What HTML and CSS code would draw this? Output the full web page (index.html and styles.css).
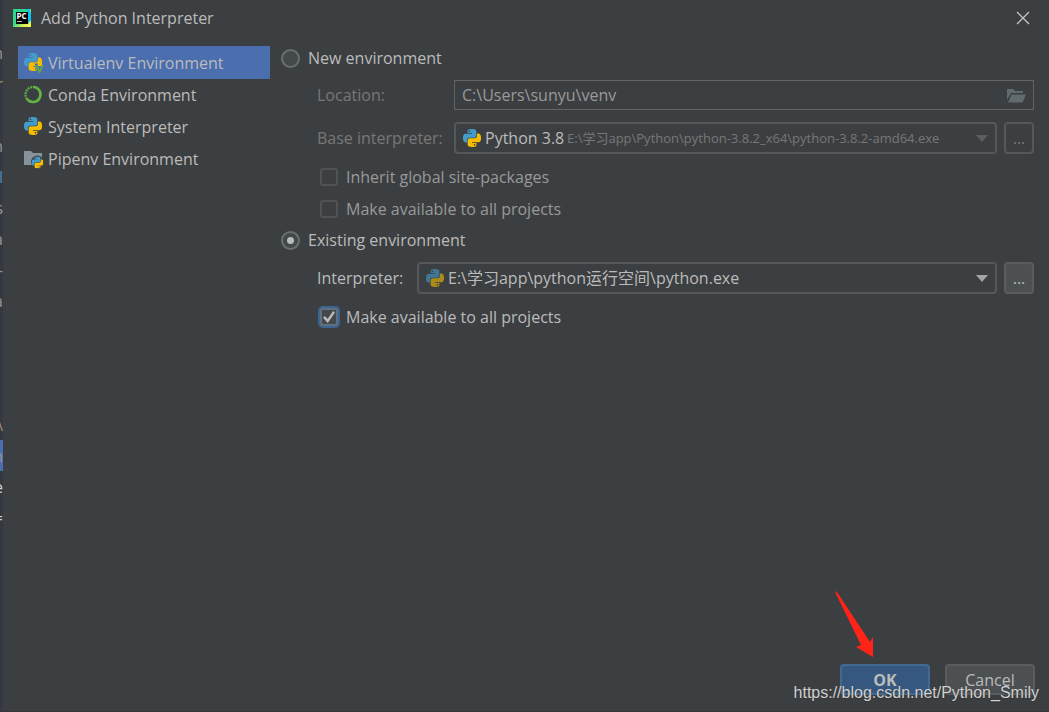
FILE: index.html
```html
<!DOCTYPE html>
<html lang="en">
<head>
<meta charset="utf-8">
<title>Add Python Interpreter</title>
<link rel="stylesheet" href="styles.css">
</head>
<body>
<svg class="defs" aria-hidden="true">
  <symbol id="snake" viewBox="0 0 24 24">
    <path d="M14.25.18l.9.2.73.26.59.3.45.32.34.34.25.34.16.33.1.3.04.26.02.2-.01.13V8.5l-.05.63-.13.55-.21.46-.26.38-.3.31-.33.25-.35.19-.35.14-.33.1-.3.07-.26.04-.21.02H8.77l-.69.05-.59.14-.5.22-.41.27-.33.32-.27.35-.2.36-.15.37-.1.35-.07.32-.04.27-.02.21v3.06H3.17l-.21-.03-.28-.07-.32-.12-.35-.18-.36-.26-.36-.36-.35-.46-.32-.59-.28-.73-.21-.88-.14-1.05-.05-1.23.06-1.22.16-1.04.24-.87.32-.71.36-.57.4-.44.42-.33.42-.24.4-.16.36-.1.32-.05.24-.01h.16l.06.01h8.16v-.83H6.18l-.01-2.75-.02-.37.05-.34.11-.31.17-.28.25-.26.31-.23.38-.2.44-.18.51-.15.58-.12.64-.1.71-.06.77-.04.84-.02 1.27.05zm-6.3 1.98l-.23.33-.08.41.08.41.23.34.33.22.41.09.41-.09.33-.22.23-.34.08-.41-.08-.41-.23-.33-.33-.22-.41-.09-.41.09z"/>
  </symbol>
  <symbol id="python" viewBox="0 0 24 24">
    <use href="#snake" width="24" height="24" fill="#429bca"/>
    <use href="#snake" width="24" height="24" fill="#f4bd00" transform="rotate(180 12 12)"/>
  </symbol>
</svg>

<div class="screen">
  <div class="editor-edge" aria-hidden="true">
    <span>n</span><span class="tan">r</span><span></span><span>n</span><span class="blue">l</span><span>s</span><span>a</span><span>-</span><span>a</span><span></span><span></span><span></span><span class="tan">\</span><span class="selected">n</span><span class="bright">e</span><span class="bright">=</span>
  </div>

  <main class="dialog">
    <header class="titlebar">
      <svg class="app-icon" viewBox="0 0 18 18" aria-hidden="true">
        <defs>
          <linearGradient id="brand" x1="0" y1="0" x2="1" y2="1">
            <stop offset="0" stop-color="#21d789"/><stop offset=".45" stop-color="#35d98b"/><stop offset=".75" stop-color="#d9ee4c"/><stop offset="1" stop-color="#fcf84a"/>
          </linearGradient>
        </defs>
        <path fill="url(#brand)" d="M0 0h18v18H0z"/>
        <path fill="#07c3f2" d="M12 0h4l2 5v6l-3 4V3z"/>
        <path fill="#000" d="M3 3h12v12H3z"/>
        <text class="app-letters" x="3.500" y="9.500">PC</text>
        <path fill="#bbb" d="M4 12h5v1H4z"/>
      </svg>
      <h1>Add Python Interpreter</h1>
      <button class="close" type="button" aria-label="Close">
        <svg viewBox="0 0 14 14" aria-hidden="true"><path d="M1 1l12 12M13 1L1 13" stroke="#c3c5c6" stroke-width="1.3"/></svg>
      </button>
    </header>

    <div class="content">
      <nav class="sidebar" aria-label="Environment type">
        <button class="nav-item active" type="button">
          <svg class="nav-icon" viewBox="0 0 20 20" aria-hidden="true"><use href="#python" width="18" height="18"/><path d="M10.500 10.500H20V20h-6z" fill="#4b6eaf"/><path d="M14 10h4v3h-4z" fill="#f4bd00"/><path d="M12.700 12l3 7 3-7" fill="none" stroke="#5fad4a" stroke-width="1.900"/></svg>
          Virtualenv Environment
        </button>
        <button class="nav-item" type="button">
          <svg class="nav-icon" viewBox="0 0 20 20" aria-hidden="true"><path d="M9 2a7.500 7.500 0 1 1-6 12" fill="none" stroke="#62b543" stroke-width="2.600"/><path d="M3 14A7.500 7.500 0 0 1 9 2" fill="none" stroke="#62b543" stroke-width="2.200" stroke-dasharray="1.800 .9"/></svg>
          Conda Environment
        </button>
        <button class="nav-item" type="button">
          <svg class="nav-icon" viewBox="0 0 20 20" aria-hidden="true"><use href="#python" width="18" height="18"/></svg>
          System Interpreter
        </button>
        <button class="nav-item" type="button">
          <svg class="nav-icon" viewBox="0 0 20 20" aria-hidden="true"><path d="M0 2h7l2 2h9v12H0z" fill="#87939a"/><circle cx="13.500" cy="13" r="6.500" fill="#3c3f41"/><use href="#python" x="7.500" y="7.500" width="12" height="12"/></svg>
          Pipenv Environment
        </button>
      </nav>

      <form class="settings">
        <label class="choice mode"><input type="radio" name="mode">New environment</label>

        <div class="group wide muted">
          <label for="location">Location:</label>
          <div class="path-box">
            <input id="location" type="text" value="C:\Users\sunyu\venv" disabled>
            <svg class="folder" viewBox="0 0 19 15" aria-hidden="true"><path fill="#606b70" d="M0 1h6l2 2h8v2H4L0 12z"/><path fill="#606b70" d="M4.500 6.500H19L15.500 14.500H1z"/></svg>
          </div>
          <label for="base">Base interpreter:</label>
          <div class="picker-row">
            <div class="picker">
              <select id="base" disabled><option>Python 3.8</option></select>
              <svg class="logo" aria-hidden="true"><use href="#python"/></svg>
              <span class="detail">E:\学习app\Python\python-3.8.2_x64\python-3.8.2-amd64.exe</span>
              <svg class="arrow" viewBox="0 0 12 7" aria-hidden="true"><path d="M0 0h12L6 7z"/></svg>
            </div>
            <button class="more" type="button" aria-label="Browse base interpreter" disabled>...</button>
          </div>
        </div>
        <label class="choice check muted-check"><input type="checkbox" disabled>Inherit global site-packages</label>
        <label class="choice check muted-check"><input type="checkbox" disabled>Make available to all projects</label>

        <label class="choice mode"><input type="radio" name="mode" checked>Existing environment</label>
        <div class="group">
          <label for="interpreter">Interpreter:</label>
          <div class="picker-row">
            <div class="picker">
              <select id="interpreter"><option>E:\学习app\python运行空间\python.exe</option></select>
              <svg class="logo dim" aria-hidden="true"><use href="#python"/></svg>
              <svg class="arrow" viewBox="0 0 12 7" aria-hidden="true"><path d="M0 0h12L6 7z"/></svg>
            </div>
            <button class="more" type="button" aria-label="Browse interpreter">...</button>
          </div>
        </div>
        <label class="choice check last"><input type="checkbox" checked>Make available to all projects</label>
      </form>
    </div>

    <footer class="actions">
      <div class="ok-wrap">
        <svg class="pointer" viewBox="0 0 40 66" aria-hidden="true"><path fill="#ff2318" d="M1 0q-1 1 0 3l25 51-5 2 17 10V46l-3 5L2 1z"/></svg>
        <button class="action primary" type="button">OK</button>
      </div>
      <button class="action" type="button">Cancel</button>
    </footer>
    <p class="watermark">https://blog.csdn.net/Python_Smily</p>
  </main>
</div>
</body>
</html>
```

FILE: styles.css
```css
* { box-sizing: border-box; }

body {
  margin: 0;
  background: #3c3f41;
  color: #bbb;
  font: 16px/22px "Open Sans", "Noto Sans CJK SC", sans-serif;
}

button, input, select { margin: 0; font: inherit; color: inherit; }
.defs { position: absolute; width: 0; height: 0; }

.screen { display: flex; min-height: 100vh; }

.editor-edge {
  display: grid;
  grid-template-columns: 3px;
  grid-auto-rows: 31px;
  align-content: start;
  flex: none;
  width: 3px;
  padding-top: 37px;
  overflow: hidden;
  background: #343841;
  color: #8f969b;
}
.editor-edge span {
  display: flex;
  align-items: center;
  justify-content: flex-end;
  line-height: 20px;
}
.editor-edge .tan { color: #a58c72; }
.editor-edge .blue { color: #4f86bd; }
.editor-edge .selected { background: #4b6eaf; }
.editor-edge .bright { color: #d0d0d0; }

.dialog {
  position: relative;
  display: flex;
  flex: 1;
  flex-direction: column;
  border-bottom: 1px solid #383536;
}

.titlebar {
  display: flex;
  align-items: center;
  gap: 10px;
  height: 36px;
  padding: 0 16px 0 10px;
}
.titlebar h1 { flex: 1; margin: 0; font-size: 16px; font-weight: 400; }
.app-icon { width: 18px; height: 18px; }
.app-letters { fill: #fff; font: bold 8px "Open Sans", sans-serif; }
.close { display: flex; padding: 3px; border: 0; background: none; }
.close svg { width: 14px; height: 14px; }

.content { display: flex; flex: 1; gap: 11px; padding: 10px 15px 0; }

.sidebar { display: flex; flex: 0 1 252px; flex-direction: column; }
.nav-item {
  display: flex;
  align-items: center;
  gap: 4px;
  height: 32px;
  padding: 0 6px;
  border: 0;
  background: none;
  white-space: nowrap;
}
.nav-item.active { height: 33px; background: #4b6eaf; }
.nav-icon { flex: none; width: 20px; height: 20px; }

.settings { flex: 1; min-width: 0; }
.choice { display: flex; align-items: center; width: fit-content; }
.choice input { display: grid; place-items: center; flex: none; appearance: none; }
.mode { gap: 8px; height: 24px; }
.mode input {
  width: 19px;
  height: 19px;
  border: 2px solid #6b6e6f;
  border-radius: 50%;
  background: #43494a;
}
.mode input:checked::before {
  width: 7px;
  height: 7px;
  border-radius: 50%;
  background: #bbb;
  content: "";
}

.group {
  display: grid;
  grid-template-columns: 92px 1fr;
  align-items: center;
  gap: 12px 8px;
  padding: 10px 0 12px 36px;
}
.group.wide { grid-template-columns: 129px 1fr; padding-bottom: 7px; }
.muted > label { color: #777; }

.path-box {
  display: flex;
  align-items: center;
  height: 30px;
  padding: 0 7px;
  border: 1px solid #646464;
}
.path-box input {
  flex: 1;
  min-width: 0;
  padding: 0;
  border: 0;
  background: none;
  color: #999;
}
.folder { width: 19px; height: 15px; }

.picker-row { display: flex; gap: 7px; }
.picker { display: grid; flex: 1; align-items: center; min-width: 0; }
.picker > * { grid-area: 1 / 1; }
.picker select {
  width: 100%;
  height: 32px;
  padding: 0 29px;
  border: 2px solid #55585a;
  border-radius: 4px;
  appearance: none;
  background: #3c3f41;
  opacity: 1;
}
.logo, .detail, .arrow { pointer-events: none; }
.logo { width: 18px; height: 18px; margin-left: 9px; }
.logo.dim { opacity: .6; }
.detail {
  margin: 0 30px 0 113px;
  overflow: hidden;
  color: #777;
  font-size: 13px;
  white-space: nowrap;
}
.arrow { justify-self: end; width: 12px; height: 7px; margin-right: 9px; fill: #a2a5a6; }
.muted .arrow { fill: #5c5f60; }

.more {
  flex: none;
  width: 30px;
  height: 32px;
  padding: 0;
  border: 2px solid #5a5d5f;
  border-radius: 4px;
  background: #4c5052;
}
.more:disabled { border-color: #55585a; background: none; color: #777; }

.check { gap: 8px; height: 32px; margin-left: 39px; }
.check input {
  width: 18px;
  height: 18px;
  border: 2px solid #505354;
  border-radius: 3px;
}
.muted-check { color: #999; }
.muted-check:has(+ .mode) { margin-bottom: 3px; }
.last { height: 22px; }
.last input { border-color: #5f7080; background: #43494a; box-shadow: 0 0 0 2px #3d6591; }
.last input::before {
  width: 12px;
  height: 12px;
  background: #bbb;
  clip-path: polygon(0 56%, 16% 42%, 38% 66%, 84% 0, 100% 12%, 40% 100%);
  content: "";
}

.actions { display: flex; justify-content: flex-end; gap: 15px; padding: 0 14px 16px; }
.ok-wrap { position: relative; display: flex; }
.action {
  width: 90px;
  height: 31px;
  padding: 0;
  border: 2px solid #5a5d5f;
  border-radius: 4px;
  background: #4c5052;
}
.action.primary { border-color: #426a91; background: #365880; font-weight: 700; }
.pointer { position: absolute; bottom: 38px; left: -5px; width: 40px; height: 66px; }

.watermark {
  position: absolute;
  right: 10px;
  bottom: 8px;
  margin: 0;
  color: #d0d0d0;
  font: 16px/20px "Liberation Sans", sans-serif;
  text-shadow: 0 1px 1px #333;
}
```
